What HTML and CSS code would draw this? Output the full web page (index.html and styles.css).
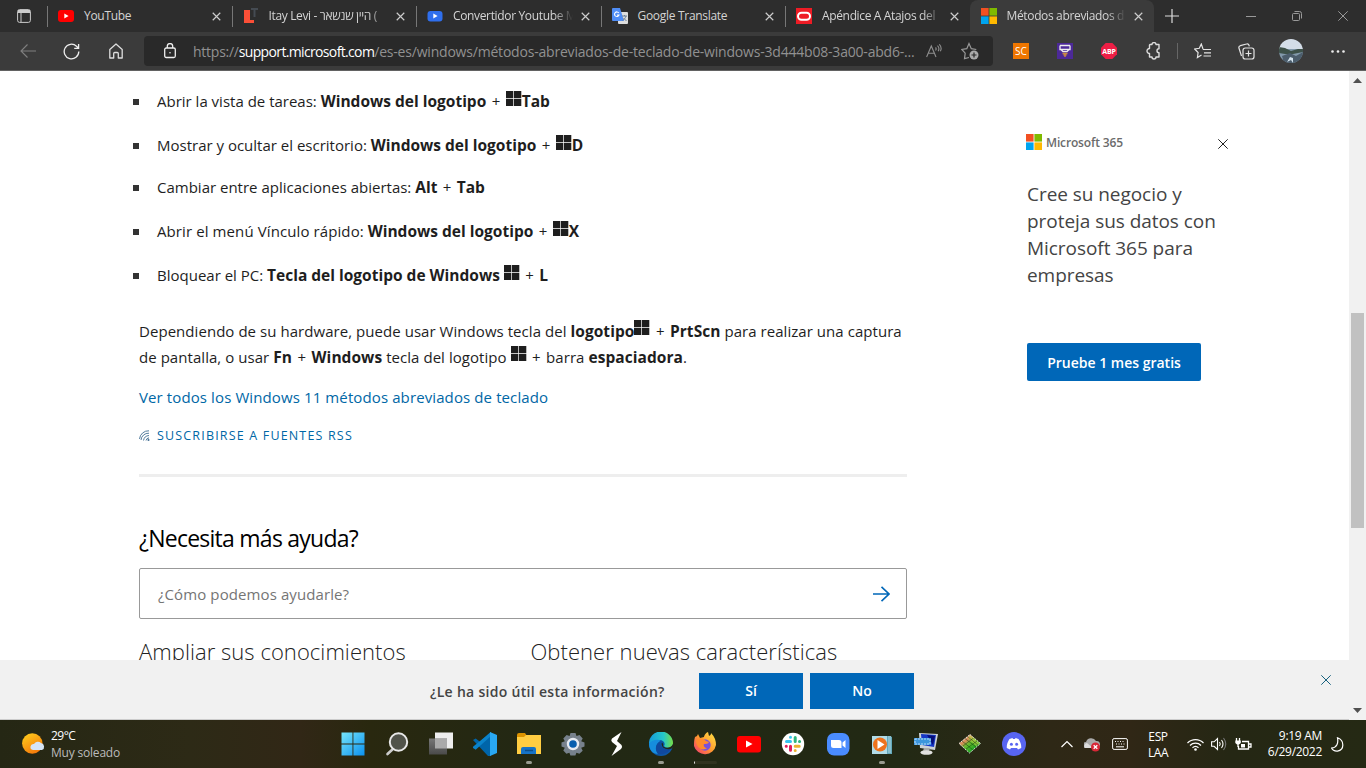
FILE: index.html
```html
<!DOCTYPE html>
<html lang="es">
<head>
<meta charset="utf-8">
<title>Métodos abreviados de teclado de Windows</title>
<link rel="stylesheet" href="styles.css">
</head>
<body>
<svg width="0" height="0" class="defs">
  <symbol id="close" viewBox="0 0 10 10"><path d="M.8.8l8.400 8.400M9.200.8L.8 9.200" fill="none" stroke="currentColor" stroke-width="1.300"/></symbol>
  <symbol id="thin" viewBox="0 0 10 10"><path d="M.3.3l9.400 9.400M9.700.3L.3 9.700" fill="none" stroke="currentColor" stroke-width="1"/></symbol>
  <symbol id="win" viewBox="0 0 16 16"><path d="M0 0h7.300v7.300H0zM8 0h7.300v7.300H8zM0 8h7.300v7H0zM8 8h7.300v7H8z" fill="#1e1e1e"/></symbol>
  <symbol id="ms" viewBox="0 0 16 16"><path d="M0 0h7.600v7.600H0z" fill="#f25022"/><path d="M8.400 0H16v7.600H8.400z" fill="#7fba00"/><path d="M0 8.400h7.600V16H0z" fill="#00a4ef"/><path d="M8.400 8.400H16V16H8.400z" fill="#ffb900"/></symbol>
</svg>
<header class="tabs">
  <div class="tab-menu"><svg width="14" height="14" viewBox="0 0 14 14" fill="none" stroke="#ccc"><rect x=".6" y=".6" width="12.800" height="12.800" rx="2"/><path d="M1 3.500h12M4 3.500V13" /><path d="M1 2h12" stroke-width="2"/></svg></div>
  <div class="tab"><svg class="fav" viewBox="0 0 16 16"><rect y="2" width="16" height="12" rx="3" fill="#f00"/><path d="M6.300 5.500v5l4.300-2.500z" fill="#fff"/></svg><span class="title">YouTube</span><svg class="x"><use href="#close"/></svg></div>
  <div class="tab"><svg class="fav" viewBox="0 0 16 16"><path d="M1 2h6v10h4v3H1z" fill="#fb4f37"/><path d="M8 1h7M11.500 1v8" stroke="#454b52" stroke-width="2"/></svg><span class="title fade t2">Itay Levi - <bdi>היין שנשאר</bdi> (</span><svg class="x"><use href="#close"/></svg></div>
  <div class="tab"><svg class="fav" viewBox="0 0 16 16"><rect x=".5" y="3" width="15" height="10.500" rx="3" fill="#2f6fed"/><path d="M6.300 5.500v5l4.300-2.500z" fill="#fff"/></svg><span class="title fade">Convertidor Youtube M</span><svg class="x"><use href="#close"/></svg></div>
  <div class="tab"><svg class="fav" viewBox="0 0 16 16"><rect x="6" y="4" width="10" height="12" rx="1" fill="#ddd"/><path d="M1 0h7l4 13H1a1 1 0 0 1-1-1V1a1 1 0 0 1 1-1z" fill="#4f8df6"/><path d="M6.800 5A2.300 2.300 0 1 0 7 7H5" fill="none" stroke="#fff" stroke-width="1.100"/><path d="M10 8h5M12.500 7v1M14 8c-.5 2-2 3.500-3.500 4.500M11.500 10l3 3" fill="none" stroke="#6c8097"/></svg><span class="title">Google Translate</span><svg class="x"><use href="#close"/></svg></div>
  <div class="tab"><svg class="fav" viewBox="0 0 16 16"><rect width="16" height="16" fill="#ee1c25"/><rect x="2" y="4.800" width="12" height="7" rx="3.500" fill="none" stroke="#fff" stroke-width="2"/></svg><span class="title fade">Apéndice A Atajos del</span><svg class="x"><use href="#close"/></svg></div>
  <div class="tab active"><svg class="fav"><use href="#ms"/></svg><span class="title fade">Métodos abreviados d</span><svg class="x"><use href="#close"/></svg></div>
  <svg class="plus" width="14" height="14" viewBox="0 0 14 14"><path d="M7 0v14M0 7h14" stroke="#ddd" stroke-width="1.200"/></svg>
  <div class="window-buttons">
    <svg width="10" height="10" viewBox="0 0 10 10"><path d="M0 5.500h10" stroke="#999"/></svg>
    <svg width="10" height="10" viewBox="0 0 10 10" fill="none" stroke="#999"><rect x=".5" y="2.500" width="7" height="7" rx="1"/><path d="M2.500.5h5a2 2 0 0 1 2 2v5"/></svg>
    <svg width="10" height="10"><use href="#thin"/></svg>
  </div>
</header>
<nav class="toolbar">
  <svg class="back" width="16" height="14" viewBox="0 0 16 14" fill="none" stroke="#808080" stroke-width="1.100"><path d="M16 7H1M7.500.5L1 7l6.500 6.500"/></svg>
  <svg class="reload" width="17" height="17" viewBox="0 0 17 17" fill="none" stroke="#eee" stroke-width="1.300"><path d="M15.800 8.500a7.300 7.300 0 1 1-2.300-5.300l1.800 1.800M15.600 1v4.300h-4.400"/></svg>
  <svg class="home" width="14" height="16" viewBox="0 0 14 16" fill="none" stroke="#ddd" stroke-width="1.300"><path d="M.8 6.500L7 1l6.200 5.500V15H9.300v-4.500a1 1 0 0 0-1-1H5.700a1 1 0 0 0-1 1V15H.8z" stroke-linejoin="round"/></svg>
  <div class="address">
    <svg class="lock" width="12" height="16" viewBox="0 0 12 16" fill="none" stroke="#eee" stroke-width="1.300"><rect x=".7" y="5" width="10.600" height="9.500" rx="1.500"/><path d="M3.300 5V3.300a2.700 2.700 0 0 1 5.400 0V5"/><circle cx="6" cy="9.700" r=".8" fill="#eee" stroke="none"/></svg>
    <span class="url">https://<b>support.microsoft.com</b><span class="path">/es-es/windows/métodos-abreviados-de-teclado-de-windows-3d444b08-3a00-abd6-...</span></span>
    <svg class="read" width="16" height="14" viewBox="0 0 16 14" fill="none" stroke="#8e8e8e" stroke-width="1.100"><path d="M.6 13L5.300 2 10 13M2.200 9.300h6.200M9.500 3.500q1.300 1.300 0 3M11.500 1.700q2.500 2.600.6 5.600M13.300.3q3.100 3.400 1 7"/></svg>
    <svg class="star" width="18" height="18" viewBox="0 0 18 18" fill="none" stroke="#999" stroke-width="1.200"><path d="M8 15.500l-4.500 1.200.7-5.600L.8 7.500l5-.8L8 1.500l2.300 5.200 5 .8"/><circle cx="13" cy="13" r="4.500" fill="#aaa" stroke="none"/><path d="M13 10.500v5M10.500 13h5" stroke="#292929"/></svg>
  </div>
  <div class="extensions">
    <span class="sc">SC</span>
    <svg width="16" height="16" viewBox="0 0 16 16"><path d="M0 0h16v16H0z" fill="#4c2998"/><path d="M3 2.500h10M3 2.500v4h10v-4M4 6.500l2 2.200h4l2-2.200" fill="none" stroke="#eee" stroke-width="1.300"/><path d="M5.500 10.500h5M6.500 12h3M8 12v2" stroke="#c88845" stroke-width="1.400"/></svg>
    <span class="abp"><svg width="16" height="16" viewBox="0 0 16 16"><path d="M4.700 0h6.600L16 4.700v6.600L11.300 16H4.700L0 11.300V4.700z" fill="#ed1e45"/></svg><b>ABP</b></span>
    <svg width="16" height="18" viewBox="0 0 16 18" fill="none" stroke="#ddd" stroke-width="1.400" stroke-linejoin="round"><path d="M5 2.500h2a2 2 0 0 1 4 0h3v4.200a2 2 0 1 0 0 4V15h-3a2 2 0 0 1-4 0H4.500v-3.500a2.100 2.100 0 1 1 0-5V3z"/></svg>
  </div>
  <i class="divider"></i>
  <div class="browser-tools">
    <svg width="17" height="16" viewBox="0 0 17 16" fill="none" stroke="#e4e4e4" stroke-width="1.200"><path d="M9.500 6H9L7.300 1 5.300 5.300.7 6l3.400 3.500-.7 5L7.500 12M9 6.500h8M10 9.800h7M9.500 13H17"/></svg>
    <svg width="17" height="17" viewBox="0 0 17 17" fill="none" stroke="#e4e4e4" stroke-width="1.200"><path d="M3.500 13L1 5.200a2 2 0 0 1 1.300-2.500L8.500 1a2 2 0 0 1 2.500 1.300l.3 1"/><rect x="5" y="5" width="11" height="11" rx="2.300"/><path d="M10.500 7.500v6M7.500 10.500h6"/></svg>
    <svg class="avatar" width="24" height="24" viewBox="0 0 24 24"><defs><clipPath id="face"><circle cx="12" cy="12" r="12"/></clipPath></defs><g clip-path="url(#face)"><path d="M0 0h24v12H0z" fill="#d3dde8"/><path d="M0 10h24v14H0z" fill="#8299ab"/><path d="M0 8l6 1 6 3 7-2 5 0v3l-10 2-8 0-6-1z" fill="#3d5149"/><path d="M3 17l8-3 6 3 7-4v8l-9 3H5z" fill="#4b5d6c"/><path d="M11 18l-3 5 4-2 2 3v-5z" fill="#d3e3ed"/></g></svg>
    <svg class="more" width="14" height="3" viewBox="0 0 14 3" fill="#eee"><circle cx="1.500" cy="1.500" r="1.300"/><circle cx="7" cy="1.500" r="1.300"/><circle cx="12.500" cy="1.500" r="1.300"/></svg>
  </div>
</nav>
<main class="viewport">
  <div class="page">
    <article class="article">
      <ul class="shortcuts">
        <li>Abrir la vista de tareas: <b>Windows del logotipo</b> <i>+</i> <svg class="win"><use href="#win"/></svg><b>Tab</b></li>
        <li>Mostrar y ocultar el escritorio: <b>Windows del logotipo</b> <i>+</i> <svg class="win"><use href="#win"/></svg><b>D</b></li>
        <li class="short">Cambiar entre aplicaciones abiertas: <b>Alt</b> <i>+</i> <b>Tab</b></li>
        <li><span class="menu">Abrir el menú Vínculo rápido:</span> <b>Windows del logotipo</b> <i>+</i> <svg class="win"><use href="#win"/></svg><b>X</b></li>
        <li>Bloquear el PC: <b>Tecla del logotipo de Windows</b> <svg class="win"><use href="#win"/></svg> <i>+</i> <b>L</b></li>
      </ul>
      <p class="hardware">Dependiendo de su hardware, puede usar Windows tecla del <b>logotipo</b><svg class="win"><use href="#win"/></svg> <i>+</i> <b>PrtScn</b> para realizar una captura<br>de pantalla, o usar <b>Fn</b> <i>+</i> <b>Windows</b> tecla del logotipo <svg class="win"><use href="#win"/></svg> <i>+</i> barra <b>espaciadora</b>.</p>
      <a class="all">Ver todos los Windows 11 métodos abreviados de teclado</a>
      <a class="rss"><svg width="11" height="11" viewBox="0 0 11 11" fill="none" stroke="#3f6d91" stroke-width=".9"><path d="M.5 9A9 9 0 0 1 10 .8M2 10A7.500 7.500 0 0 1 10 3.200M4.500 10.500A6 6 0 0 1 10 5.500M7 10.500A3.500 3.500 0 0 1 10 7.800"/><circle cx="9.500" cy="10" r=".7" fill="#3f6d91"/></svg><span>SUSCRIBIRSE A FUENTES RSS</span></a>
      <hr>
      <h2>¿Necesita más ayuda?</h2>
      <div class="search"><span>¿Cómo podemos ayudarle?</span><svg width="17" height="16" viewBox="0 0 17 16" fill="none" stroke="#0067b8" stroke-width="1.600"><path d="M0 8h16M8.500.8L16 8l-7.500 7.200"/></svg></div>
      <div class="columns"><h3>Ampliar sus conocimientos</h3><h3>Obtener nuevas características</h3></div>
    </article>
    <aside class="promo">
      <div class="brand"><svg width="16" height="16"><use href="#ms"/></svg><span>Microsoft 365</span><svg class="dismiss" width="10" height="10"><use href="#thin"/></svg></div>
      <p>Cree su negocio y<br>proteja sus datos con<br>Microsoft 365 para<br>empresas</p>
      <button>Pruebe 1 mes gratis</button>
    </aside>
  </div>
  <div class="feedback"><span>¿Le ha sido útil esta información?</span><button>Sí</button><button>No</button><svg class="dismiss" width="10" height="10"><use href="#thin"/></svg></div>
  <div class="scrollbar"><svg width="9" height="5"><path d="M4.500 0L9 5H0z" fill="#505050"/></svg><i class="thumb"></i><svg class="down" width="9" height="5"><path d="M0 0h9L4.500 5z" fill="#505050"/></svg></div>
</main>
<footer class="taskbar">
  <div class="weather">
    <svg width="23" height="22" viewBox="0 0 23 22"><defs><linearGradient id="sun" x2=".6" y2="1"><stop stop-color="#ffd21e"/><stop offset="1" stop-color="#f57a0b"/></linearGradient></defs><circle cx="10.300" cy="10.500" r="10.200" fill="url(#sun)"/><path d="M11 17a3 3 0 0 1 1-6 4.500 4.500 0 0 1 7-1 3.700 3.700 0 0 1 1 7z" fill="#d5e4f7"/></svg>
    <div><span class="temp">29°C</span><span class="sky">Muy soleado</span></div>
  </div>
  <div class="apps">
    <span><svg viewBox="0 0 24 24"><defs><linearGradient id="start" x2="1" y2="1"><stop stop-color="#76e5fb"/><stop offset="1" stop-color="#0b91ef"/></linearGradient></defs><path d="M.5.500h11v11H.5zM12.400.5h11.100v11H12.400zM.5 12.500h11v11H.5zM12.400 12.500h11.100v11H12.400z" fill="url(#start)"/></svg></span>
    <span><svg viewBox="0 0 24 24"><path d="M8.500 16.500L2.500 22" stroke="#ccc" stroke-width="2.600" stroke-linecap="round"/><circle cx="13.500" cy="10" r="8.700" fill="#51534a" stroke="#e8e8e8" stroke-width="2"/></svg></span>
    <span><svg viewBox="0 0 24 24"><defs><linearGradient id="pane" x2="0" y2="1"><stop stop-color="#777"/><stop offset="1" stop-color="#4a4a4a"/></linearGradient></defs><path d="M6 .5h18v16H6z" fill="#eee"/><path d="M0 6.500h18v16H0z" fill="url(#pane)"/><path d="M6 6.500h12v10H6z" fill="#aaa"/></svg></span>
    <span><svg viewBox="0 0 24 24"><path d="M17.500 0L7 9.800 2.700 6.500 0 8l15 16h3z" fill="#0065a9"/><path d="M0 16l2.700 1.800L18 4V0L0 14.700z" fill="#0b83ca"/><path d="M17 0l7 3v18l-7 3z" fill="#29a8f3"/></svg></span>
    <span class="open"><svg viewBox="0 0 24 24"><path d="M0 3a2 2 0 0 1 2-2h6l2 3v5H0z" fill="#dc9300"/><path d="M0 5h7l2-2h15v19H0z" fill="#ffcd42"/><path d="M4 22v-5a2 2 0 0 1 2-2h11a2 2 0 0 1 2 2v5z" fill="#1673c7"/><path d="M8 18.500h8" stroke="#0c4d88" stroke-width="1.500"/></svg></span>
    <span><svg viewBox="0 0 24 24"><path d="M9.500 1h5l1 3 3-1 3.200 3.600-1.500 2.700 3.300 1.200v4l-3.300 1.300 1.500 3-3.300 3-3-1-1 2.700h-5l-1-2.700-3 1-3.100-3.300 1.500-2.700-3.300-1.300v-4l3.300-1.200L2.300 6.600 5.600 3l3 1z" fill="#77818c"/><circle cx="12" cy="12" r="5" fill="#075eae" stroke="#e6eaf0" stroke-width="2.400"/></svg></span>
    <span><svg viewBox="0 0 24 24"><path d="M16.500 0L7 6.500Q5.500 8 7 10l5 4-5.500 10L16 17q2-2 .5-4L12 9z" fill="#fff"/></svg></span>
    <span class="open"><svg viewBox="0 0 24 24"><defs><linearGradient id="edge" x2="1" y2="0"><stop stop-color="#159bd9"/><stop offset=".6" stop-color="#25c7cb"/><stop offset="1" stop-color="#77df43"/></linearGradient></defs><circle cx="12" cy="12" r="12" fill="#0d55a4"/><path d="M0 12A12 12 0 0 1 24 11c0 5-7 6-9 3 2-3-1-6-4.500-6C5 8 3 11 0 12z" fill="url(#edge)"/><path d="M0 12c3-5 10-5 12-3-4 1-7 6-3 13C4 22 0 18 0 12z" fill="#168ddd"/><path d="M12 9c-2 2 0 8 6 8 3 0 4-1 4-1-2 5-8 7-13 6-4-5-2-11 3-13z" fill="#10489d"/><path d="M13 10.500c1 1 1.500 2 1 3.500 2 3 9 2 10-2v3c-2 3.500-8 2-10 .5-1-1.500-2-3.500-1-5z" fill="#222814"/></svg></span>
    <span class="loading"><svg viewBox="0 0 24 24"><defs><linearGradient id="fox" x1="1" x2="0" y2="1"><stop stop-color="#ffe848"/><stop offset=".5" stop-color="#ff9b2f"/><stop offset="1" stop-color="#f23175"/></linearGradient></defs><path d="M2 5l2-1 1-2 2 4 4-1c0-2 3-5 4-5l1 4c2-1 2-2 2-3 4 4 5 8 5 12a11.300 11.300 0 0 1-22 1c0-3 0-6 1-9z" fill="url(#fox)"/><circle cx="12" cy="13" r="5.700" fill="#7950dc"/><path d="M3 8c4-3 8-2 10 1l3 1c-1 2-3 2-5 2-1 2 1 4 3 4-5 4-11-1-11-8z" fill="#ff8b2d"/></svg></span>
    <span><svg viewBox="0 0 24 24"><rect y="4" width="24" height="16.500" rx="3" fill="#f00"/><path d="M9 8.500v7l6.500-3.500z" fill="#fff"/></svg></span>
    <span><svg viewBox="0 0 24 24"><circle cx="12" cy="12" r="11.200" fill="#fff"/><g fill="none" stroke-width="3" stroke-linecap="round"><path d="M9.500 5.200v.1M5.500 9.500h4" stroke="#36c5f0"/><path d="M14.200 5.500v4M18.500 9.500h.1" stroke="#2eb67d"/><path d="M14.200 14.300h4M14.200 18.500v.1" stroke="#ecb22e"/><path d="M5.200 14.300h.1M9.500 14.300v4" stroke="#e01e5a"/></g></svg></span>
    <span><svg viewBox="0 0 24 24"><rect x="1" y="1" width="22.500" height="22.500" rx="7" fill="#4a8cff"/><path d="M5 8h8a2.500 2.500 0 0 1 2.500 2.500V16h-8A2.500 2.500 0 0 1 5 13.500zM16.500 10.500L19.500 8v8l-3-2.500z" fill="#fff"/></svg></span>
    <span class="open"><svg viewBox="0 0 24 24"><path d="M2 4h18l2 1v17H3z" fill="#63a9ba"/><path d="M2 4h15v18H2z" fill="#b1dce8"/><path d="M18 4h3v17h-3z" fill="#89bfce"/><circle cx="10" cy="12.500" r="7" fill="#ee731d"/><path d="M7.500 8v9l7-4.500z" fill="#fff"/></svg></span>
    <span><svg viewBox="0 0 24 24"><path d="M5 1l19 1-3 16-15-2z" fill="#ccd2d6"/><path d="M7 2l15 1-2 12-12-2z" fill="#1537c7"/><path d="M13 3l8 1-2 9z" fill="#070f78"/><path d="M0 6h17v7H0z" fill="#3c96dc"/><path d="M1 7h15v5H1z" fill="none" stroke="#b8dafa" stroke-dasharray="2 1"/><path d="M10 16h6l-1 3H9z" fill="#aaa"/><ellipse cx="12.500" cy="20.500" rx="6" ry="2.300" fill="#e1e1df"/></svg></span>
    <span><svg viewBox="0 0 24 24"><defs><linearGradient id="prism" x1=".1" y1=".1" x2=".8" y2=".9"><stop stop-color="#f5c7a1"/><stop offset=".3" stop-color="#d78a57"/><stop offset=".5" stop-color="#67bc2f"/><stop offset="1" stop-color="#029b1b"/></linearGradient></defs><path d="M12 2.500L22.500 11.500 11.500 21 1 11.500z" fill="url(#prism)"/><path d="M12 3l10 8.500-4 2.500-8-8z" fill="#bfd34a" opacity=".6"/><path d="M4 9l11 9M7 6.500L18 15M9.500 4.500l11 9M19 9L8 17M15.500 6L5 14" stroke="#17380e" stroke-width=".5"/><path d="M12 2.500L22.500 11.500 11.500 21 1 11.500z" fill="none" stroke="#fff" stroke-width=".8" stroke-dasharray="2 1"/></svg></span>
    <span><svg viewBox="0 0 24 24"><circle cx="12" cy="12" r="12" fill="#5865f2"/><path d="M7.500 7l3-1 .5 1h2l.5-1 3 1c2 3 3 6 2.700 9L16 17.500l-1-1.500H9l-1 1.500L4.800 16C4.500 13 5.500 10 7.500 7z" fill="#fff"/><circle cx="9.400" cy="12.300" r="1.500" fill="#5865f2"/><circle cx="14.600" cy="12.300" r="1.500" fill="#5865f2"/></svg></span>
  </div>
  <div class="tray">
    <svg width="12" height="8" viewBox="0 0 12 8" fill="none" stroke="#fff" stroke-width="1.200"><path d="M.5 7L6 1.500 11.500 7"/></svg>
    <svg class="cloud" width="16" height="15" viewBox="0 0 16 15"><path d="M2 11a3 3 0 0 1 0-6 5.500 5.500 0 0 1 10-1 3.500 3.500 0 0 1 1 7z" fill="#aaa"/><path d="M1 11a3 3 0 0 1 2-5l6 5z" fill="#ddd"/><circle cx="11.500" cy="10" r="4.500" fill="#d82736"/><path d="M9.700 8.200l3.600 3.600m0-3.600l-3.600 3.600" stroke="#fff" stroke-width="1.300"/></svg>
    <svg class="keyboard" width="16" height="12" viewBox="0 0 16 12" fill="none" stroke="#fff"><rect x=".6" y=".6" width="14.800" height="10.800" rx="1.500"/><path d="M3 3.500h10M4 6h9" stroke-dasharray="1 1.500"/><path d="M4 8.800h8"/></svg>
    <div class="lang">ESP<br>LAA</div>
    <svg class="wifi" width="17" height="13" viewBox="0 0 17 13" fill="none" stroke="#fff" stroke-width="1.200"><path d="M.5 5a11 11 0 0 1 16 0M3 7.500a7.700 7.700 0 0 1 11 0M5.500 9.700a4.500 4.500 0 0 1 6 0"/><circle cx="8.500" cy="11.500" r="1.300" fill="#fff" stroke="none"/></svg>
    <svg class="sound" width="17" height="14" viewBox="0 0 17 14" fill="none" stroke="#fff" stroke-width="1.100"><path d="M.6 4.800h2.500L6.500 1.500v11L3.100 9.300H.6zM8.500 5q1.500 2 0 4M10.500 3q3 4 0 8"/><path d="M12.500 1q4.500 6 0 12" stroke="#777"/></svg>
    <svg class="battery" width="17" height="13" viewBox="0 0 17 13" fill="none" stroke="#fff" stroke-width="1.300"><path d="M7 3.500h6.500v7.500h-10V8"/><path d="M14 6h2v3h-2M1.500 0v3M4.500 0v3M3 5v4" /><path d="M.3 2.500h5.500V5L4 6.500H2L.3 5zM6 6h4v3.500H6z" fill="#fff" stroke="none"/></svg>
    <div class="clock">9:19 AM<br>6/29/2022</div>
    <svg class="moon" width="13" height="15" viewBox="0 0 13 15" fill="none" stroke="#fff" stroke-width="1.200"><path d="M6.500.8c7 2.500 7.200 12 0 13.300-2.800.2-5-1-5.900-3C6 10.500 7.500 6 6.500.8z"/></svg>
  </div>
</footer>
</body>
</html>
```
FILE: styles.css
```css
* { box-sizing: border-box; }
body { margin: 0; width: 1366px; height: 768px; overflow: hidden; font-family: "Open Sans", "Noto Sans", sans-serif; display: flex; flex-direction: column; }
svg { display: block; flex: none; }
.defs { position: absolute; }
button { border: 0; font-family: inherit; padding: 0; }

.tabs { height: 32px; flex: none; background: #2d2d2d; display: flex; align-items: center; }
.tab-menu { width: 47px; padding-left: 17px; }
.tab { flex: none; width: 184.500px; height: 32px; display: flex; align-items: center; padding: 0 11px 0 11px; color: #d4d4d4; font-size: 12px; background: linear-gradient(#777, #777) 0 6px / 1px 21px no-repeat; }
.tab.active { background: #3b3b3b; border-radius: 8px 8px 0 0; }
.fav { width: 16px; height: 16px; margin-right: 10px; }
.title { flex: 1; min-width: 0; white-space: nowrap; letter-spacing: -.3px; padding-bottom: 1px; margin-right: 8px; }
.t2 { letter-spacing: -.2px; }
.fade { letter-spacing: -.35px; -webkit-mask-image: linear-gradient(90deg, #000 84%, transparent 100%); mask-image: linear-gradient(90deg, #000 84%, transparent 100%); }
.x { width: 9px; height: 9px; color: #ccc; }
.plus { margin-left: 11px; }
.window-buttons { flex: 1; display: flex; justify-content: flex-end; gap: 36px; padding-right: 18px; color: #999; }

.toolbar { height: 39px; flex: none; background: #3b3b3b; border-bottom: 1px solid #626262; display: flex; align-items: center; }
.back { margin-left: 20px; }
.reload { margin-left: 27px; }
.home { margin-left: 29px; }
.address { margin-left: 21px; width: 849px; height: 30px; background: #292929; border-radius: 4px; display: flex; align-items: center; padding-left: 20px; }
.url { margin-left: 17px; width: 724px; color: #919191; font-size: 14px; letter-spacing: -.25px; white-space: nowrap; }
.url b { color: #fff; font-weight: 400; letter-spacing: -.65px; }
.url .path { letter-spacing: -.2px; }
.read { margin-left: 9px; }
.star { margin-left: 19px; }
.extensions { display: flex; align-items: center; gap: 28px; margin-left: 20px; }
.sc, .abp { width: 16px; height: 16px; display: grid; place-items: center; color: #fff; }
.sc { background: #ee7600; font-size: 10px; }
.abp > * { grid-area: 1 / 1; }
.abp b { font-size: 7px; letter-spacing: -.2px; }
.divider { width: 1px; height: 16px; background: #666; margin-left: 16px; }
.browser-tools { display: flex; align-items: center; margin-left: 16px; }
.browser-tools svg + svg { margin-left: 27px; }
.browser-tools .avatar { margin-left: 24px !important; }
.browser-tools .more { margin-left: 28px !important; }

.viewport { height: 649px; flex: none; display: grid; grid-template-columns: 1349px 17px; grid-template-rows: 589px 60px; background: #fff; }
.page { display: flex; overflow: hidden; padding-left: 139px; }
.article { width: 768px; flex: none; color: #1e1e1e; font-size: 15px; }
.article b { font-weight: 700; font-size: 15.500px; line-height: 20px; }
.article i { font-style: normal; padding: 0 1.500px; }
.shortcuts { list-style: none; margin: 0; padding: 8px 0 0; }
.shortcuts li { height: 44px; line-height: 44px; padding-left: 18px; white-space: nowrap; }
.shortcuts li::before { content: ""; display: inline-block; width: 6px; height: 6px; background: #333; margin: 0 18px 2px -24px; vertical-align: baseline; }
.shortcuts .short { height: 42px; line-height: 41px; }
.menu { letter-spacing: .1px; }
.win { width: 16px; height: 16px; display: inline-block; vertical-align: 0; }
.hardware { margin: 21px 0 0; line-height: 26px; white-space: nowrap; letter-spacing: .05px; }
.hardware .win { vertical-align: 1px; }
.all { display: block; margin-top: 14px; line-height: 26px; color: #0067a6; letter-spacing: .11px; }
.rss { display: flex; gap: 7px; align-items: center; height: 22px; margin-top: 14px; font-size: 12.500px; letter-spacing: 1.170px; color: #0067a6; }
.article hr { border: 0; height: 3px; background: #eee; margin: 28px 0 0; }
.article h2 { margin: 43px 0 0; height: 36px; line-height: 36px; font-size: 23px; font-weight: 400; letter-spacing: -.75px; color: #000; }
.search { height: 51px; margin-top: 12px; border: 1px solid #999; border-radius: 2px; display: flex; align-items: center; justify-content: space-between; padding: 0 16px 0 18px; color: #757575; letter-spacing: .1px; }
.columns { display: grid; grid-template-columns: 391.500px 1fr; margin-top: 14px; }
.columns h3 { margin: 0; font-size: 22px; line-height: 36px; font-weight: 300; color: #222; white-space: nowrap; letter-spacing: .05px; }
.promo { margin: 62px 0 0 119px; width: 202px; }
.brand { display: flex; align-items: center; color: #6b6b6b; font-size: 12px; font-weight: 600; height: 18px; }
.brand span { margin-left: 4px; letter-spacing: -.15px; }
.brand .dismiss { margin: 4px 0 0 auto; color: #222; }
.promo p { margin: 30px 0 0 1px; font-size: 19px; line-height: 27px; color: #444; white-space: nowrap; letter-spacing: -.05px; }
.promo button { display: block; margin: 54px 0 0 1px; width: 174px; height: 38px; border-radius: 2px; background: #0067b8; color: #fff; font-size: 14px; font-weight: 600; }
.feedback { grid-column: 1; grid-row: 2; background: #f1f1f1; border-bottom: 1px solid #ccc; display: flex; align-items: center; padding-left: 430px; font-size: 14px; font-weight: 600; color: #444; }
.feedback span { width: 269px; white-space: nowrap; padding-top: 3px; letter-spacing: .3px; }
.feedback button { width: 104px; height: 36px; margin: 2px 7px 0 0; background: #0067b8; color: #fff; font-size: 14px; font-weight: 600; }
.feedback .dismiss { margin: -19px 18px 0 auto; color: #17617e; }
.scrollbar { grid-column: 2; grid-row: 1 / 3; background: #f1f1f1; display: flex; flex-direction: column; align-items: center; padding: 7px 0; }
.scrollbar .thumb { width: 13px; height: 215px; background: #c1c1c1; margin-top: 230px; }
.scrollbar .down { margin-top: auto; }

.taskbar { height: 48px; flex: none; color: #fff; background: linear-gradient(90deg, #252714 0, #2d2a16 190px, #312716 300px, #29280f 370px, #222814 540px, #222914 900px, #2e2816 1050px, #302716 1130px, #252714 1230px, #252914 100%); display: flex; font-size: 12px; }
.weather { flex: none; width: 331px; display: flex; align-items: center; gap: 7px; padding-left: 22px; }
.weather svg { margin-right: -1px; }
.weather span { display: block; line-height: 16px; padding-top: 1px; }
.weather .temp { letter-spacing: -.5px; }
.weather .sky { color: #bbb; letter-spacing: -.2px; }
.apps { flex: none; display: flex; align-items: center; width: 730px; }
.apps > span { flex: none; width: 44.060px; height: 48px; display: flex; flex-direction: column; align-items: center; justify-content: center; }
.apps svg { width: 24px; height: 24px; }
.apps .open::after, .apps .loading::after { content: ""; height: 3px; width: 6px; border-radius: 2px; background: #999b90; margin: 5px 0 -8px; }
.apps .loading::after { width: 23px; background: linear-gradient(90deg, #eee 1px, #30331f 1px); }
.tray { display: flex; align-items: center; text-align: right; line-height: 16px; letter-spacing: -.3px; white-space: nowrap; }
.cloud { margin-left: 11px; }
.keyboard { margin-left: 12px; }
.lang { width: 22px; margin-left: 19px; text-align: center; letter-spacing: -.4px; padding-top: 1px; }
.wifi { margin-left: 18px; }
.sound { margin-left: 7px; }
.battery { margin-left: 7px; }
.clock { width: 69px; margin-left: 1px; }
.moon { margin-left: 9px; }
```
